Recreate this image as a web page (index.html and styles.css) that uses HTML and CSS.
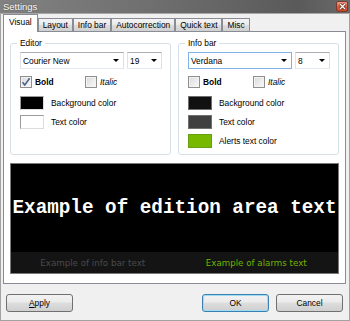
FILE: index.html
```html
<!DOCTYPE html>
<html lang="en">
<head>
    <meta charset="UTF-8">
    <title>Settings</title>
    <link rel="stylesheet" href="styles.css">
</head>
<body>
    <div class="window">
        <div class="titlebar">
            <span class="title">Settings</span>
            <span class="close">
                <svg width="7" height="7" viewBox="0 0 7 7"><path d="M1 1L6 6M6 1L1 6" stroke="#5a2316" stroke-width="2.6"/><path d="M1 1L6 6M6 1L1 6" stroke="#fff" stroke-width="1.3"/></svg>
            </span>
        </div>
        <div class="client">
            <div class="tabs">
                <div class="tab active">Visual</div>
                <div class="tab">Layout</div>
                <div class="tab">Info bar</div>
                <div class="tab">Autocorrection</div>
                <div class="tab">Quick text</div>
                <div class="tab">Misc</div>
            </div>
            <div class="panel">
                <div class="groups">
                    <fieldset class="group">
                        <legend>Editor</legend>
                        <div class="combos">
                            <div class="combo font">Courier New<span class="arrow"></span></div>
                            <div class="combo size">19<span class="arrow"></span></div>
                        </div>
                        <div class="checks">
                            <label class="check">
                                <span class="box"><svg width="10" height="10" viewBox="0 0 10 10"><path d="M1.5 5.2L3.8 8L8.6 1.2" fill="none" stroke="#4a5f8c" stroke-width="1.5"/></svg></span>
                                <b>Bold</b>
                            </label>
                            <label class="check"><span class="box"></span><i>Italic</i></label>
                        </div>
                        <div class="color"><span class="swatch sw-black"></span>Background color</div>
                        <div class="color"><span class="swatch sw-white"></span>Text color</div>
                    </fieldset>
                    <fieldset class="group">
                        <legend>Info bar</legend>
                        <div class="combos">
                            <div class="combo font focused">Verdana<span class="arrow"></span></div>
                            <div class="combo size">8<span class="arrow"></span></div>
                        </div>
                        <div class="checks">
                            <label class="check"><span class="box"></span><b>Bold</b></label>
                            <label class="check"><span class="box"></span><i>Italic</i></label>
                        </div>
                        <div class="color"><span class="swatch sw-dark"></span>Background color</div>
                        <div class="color"><span class="swatch sw-gray"></span>Text color</div>
                        <div class="color"><span class="swatch sw-green"></span>Alerts text color</div>
                    </fieldset>
                </div>
                <div class="preview">
                    <div class="edit-text">Example of edition area text</div>
                    <div class="infobar">
                        <span>Example of info bar text</span>
                        <span class="alarm">Example of alarms text</span>
                    </div>
                </div>
            </div>
            <div class="buttons">
                <button class="btn apply"><u>A</u>pply</button>
                <button class="btn default">OK</button>
                <button class="btn">Cancel</button>
            </div>
        </div>
    </div>
</body>
</html>
```
FILE: styles.css
```css
body {
    margin: 0;
    font: 8.4px "Liberation Sans", Arial, sans-serif;
    color: #000;
}
.window {
    width: 350px;
    height: 321px;
    box-sizing: border-box;
    background: #f0f0f0;
    border: 1px solid #a2a2a2;
    border-top: 0;
    display: flex;
    flex-direction: column;
}
.titlebar {
    height: 13px;
    margin: 0 -1px;
    padding: 0 2px 0 3px;
    border-bottom: 1px solid #a8a8a8;
    background: linear-gradient(to right, #828282, #6e6e6e 45%, #5a5a5a 85%, #6a6a6a);
    display: flex;
    align-items: center;
    justify-content: space-between;
}
.title {
    color: #fafafa;
    font-size: 9.5px;
    text-shadow: 0 0 2px rgba(0, 0, 0, 0.45);
}
.close {
    width: 12px;
    height: 11px;
    box-sizing: border-box;
    border: 1px solid #7c3a2a;
    border-radius: 2px;
    background: linear-gradient(#eea08a, #dc5c40 50%, #c9462b);
    display: flex;
    align-items: center;
    justify-content: center;
}
.client {
    flex: 1;
    padding: 0 3px 0 2px;
    display: flex;
    flex-direction: column;
}
.tabs {
    height: 18px;
    margin-bottom: -1px;
    display: flex;
    align-items: flex-end;
    position: relative;
    z-index: 1;
}
.tab {
    height: 13px;
    margin-bottom: 1px;
    padding: 0 4px;
    box-sizing: border-box;
    border: 1px solid #898c95;
    border-bottom: 0;
    background: linear-gradient(#f3f3f3, #ebebeb 45%, #dddddd 50%, #d0d0d0);
    line-height: 12px;
    white-space: nowrap;
}
.tab.active {
    height: 18px;
    margin-bottom: 0;
    padding: 0 5px;
    background: #fff;
    line-height: 15px;
}
.panel {
    height: 253px;
    box-sizing: border-box;
    background: #fff;
    border: 1px solid #898c95;
    padding: 6px 6px 9px;
    display: flex;
    flex-direction: column;
    gap: 8px;
}
.groups {
    display: grid;
    grid-template-columns: 1fr 1fr;
    gap: 7px;
}
.group {
    margin: 0;
    min-width: 0;
    border: 1px solid #d5dfe5;
    border-radius: 3px;
    padding: 3px 8px 6px 9px;
}
.group legend {
    margin-left: -3px;
    padding: 0 3px;
    line-height: 11px;
}
.combos {
    display: flex;
    gap: 3px;
}
.combo {
    height: 17px;
    box-sizing: border-box;
    border: 1px solid #abadb3;
    border-color: #abadb3 #dbdfe6 #e3e9ef #e2e3ea;
    background: #fff;
    padding: 0 4px 0 2px;
    display: flex;
    align-items: center;
    justify-content: space-between;
}
.combo.font {
    width: 104px;
}
.combo.size {
    flex: 1;
}
.combo.focused {
    border-color: #7eb4ea;
}
.arrow {
    border-left: 3px solid transparent;
    border-right: 3px solid transparent;
    border-top: 3px solid #000;
}
.checks {
    margin-top: 7px;
    display: grid;
    grid-template-columns: 65px 1fr;
}
.check {
    display: flex;
    align-items: center;
    gap: 3px;
    height: 12px;
}
.box {
    width: 12px;
    height: 12px;
    box-sizing: border-box;
    border: 1px solid #8f8f8f;
    background: linear-gradient(135deg, #d9d9d9, #fbfbfb);
    box-shadow: inset 0 0 0 1px #f2f2f2;
    display: flex;
    align-items: center;
    justify-content: center;
}
.color {
    margin-top: 5px;
    display: flex;
    align-items: center;
    gap: 7px;
}
.checks + .color {
    margin-top: 8px;
}
.swatch {
    width: 24px;
    height: 14px;
    box-sizing: border-box;
    border: 1px solid;
    border-color: #9a9a9a #dcdcdc #dcdcdc #9a9a9a;
}
.sw-black {
    background: #000;
}
.sw-white {
    background: #fff;
}
.sw-dark {
    background: #111;
    border-color: #6e6e6e;
}
.sw-gray {
    background: #404040;
    border-color: #707070;
}
.sw-green {
    background: #76b900;
    border-color: #6a9f12;
}
.preview {
    height: 111px;
    box-sizing: border-box;
    border: 1px solid #7a7a7a;
    background: #000;
    display: flex;
    flex-direction: column;
}
.edit-text {
    flex: 1;
    display: flex;
    align-items: center;
    justify-content: center;
    font: bold 19.3px "Liberation Mono", "Courier New", monospace;
    color: #fff;
    white-space: nowrap;
}
.infobar {
    height: 21px;
    background: #141414;
    display: grid;
    grid-template-columns: 1fr 1fr;
    align-items: center;
    text-align: center;
    font: 8.7px "DejaVu Sans", Verdana, sans-serif;
    color: #4a4a4a;
}
.alarm {
    color: #72b300;
}
.buttons {
    margin-top: 10px;
    padding: 0 3px;
    display: flex;
    gap: 7px;
}
.btn {
    width: 67px;
    height: 18px;
    box-sizing: border-box;
    border: 1px solid #707070;
    border-radius: 3px;
    background: linear-gradient(#f2f2f2, #ebebeb 45%, #dddddd 50%, #cfcfcf);
    font: inherit;
    color: #000;
    padding: 0;
}
.btn u {
    text-decoration: underline;
}
.apply {
    margin-right: auto;
}
.btn.default {
    border-color: #3c7fb1;
    box-shadow: inset 0 0 0 1px #9ddcf3;
}
```
